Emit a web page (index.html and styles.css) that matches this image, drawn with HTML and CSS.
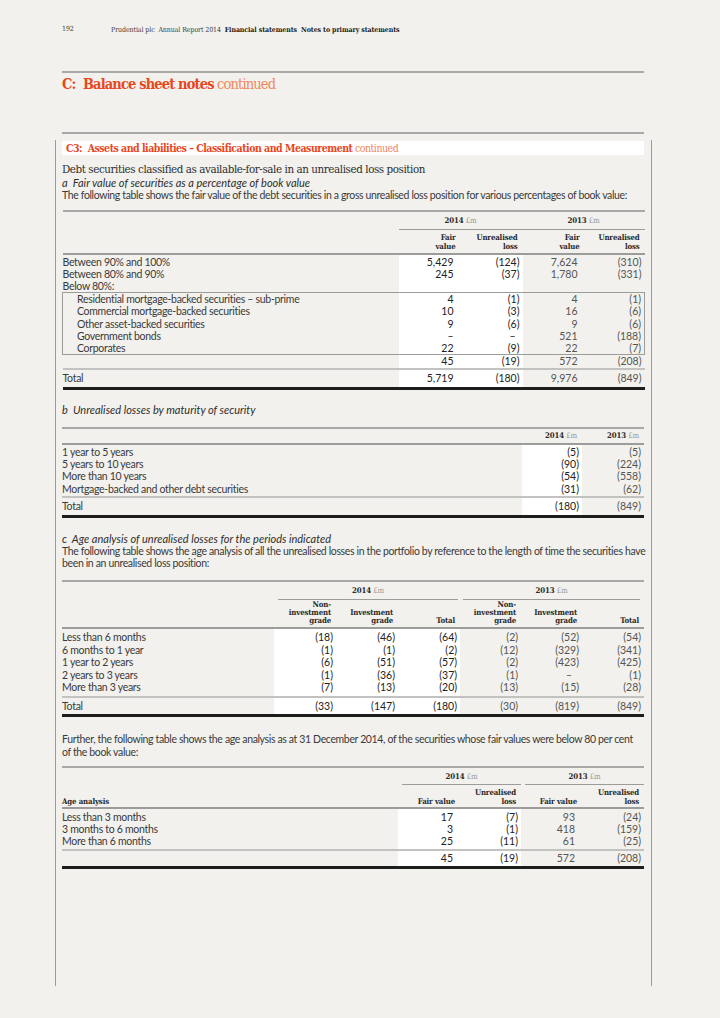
FILE: index.html
```html
<!DOCTYPE html>
<html lang="en">
<head>
<meta charset="utf-8">
<title>Prudential plc Annual Report 2014 – C3 Assets and liabilities</title>
<link rel="stylesheet" href="styles.css">
</head>
<body>
<div class="page">
  <header class="running"><span class="pg">192</span><span class="crumbs">Prudential plc&nbsp; Annual Report 2014&nbsp; <b>Financial statements&nbsp; Notes to primary statements</b></span></header>

  <section class="chapter">
    <h1 class="chapter-title"><b>C:&nbsp; Balance sheet notes</b> <span class="cont">continued</span></h1>
  </section>
  <div class="divider"></div>

  <div class="frame">
    <h2 class="note-bar"><b>C3:&nbsp; Assets and liabilities – Classification and Measurement</b> <span class="cont">continued</span></h2>

    <h3 class="subhead">Debt securities classified as available-for-sale in an unrealised loss position</h3>
    <h4 class="part">a&nbsp; Fair value of securities as a percentage of book value</h4>
    <p class="para">The following table shows the fair value of the debt securities in a gross unrealised loss position for various percentages of book value:</p>

    <table class="t t1">
      <colgroup><col class="c-lab"><col class="c-62"><col class="c-62"><col class="c-62"><col class="c-60"></colgroup>
      <thead>
        <tr class="gr"><th></th><th colspan="2" class="grp"><div class="gl">2014 <span class="u">£m</span></div></th><th colspan="2" class="grp"><div class="gl">2013 <span class="u">£m</span></div></th></tr>
        <tr class="sh"><th></th><th>Fair<br>value</th><th>Unrealised<br>loss</th><th>Fair<br>value</th><th>Unrealised<br>loss</th></tr>
      </thead>
      <tbody>
        <tr class="first"><td>Between 90% and 100%</td><td class="n w p">5,429</td><td class="n w">(124)</td><td class="n o p">7,624</td><td class="n o">(310)</td></tr>
        <tr><td>Between 80% and 90%</td><td class="n w p">245</td><td class="n w">(37)</td><td class="n o p">1,780</td><td class="n o">(331)</td></tr>
        <tr><td>Below 80%:</td><td class="n w"></td><td class="n w"></td><td class="n o"></td><td class="n o"></td></tr>
        <tr class="box bt"><td class="ind">Residential mortgage-backed securities – sub-prime</td><td class="n w p">4</td><td class="n w">(1)</td><td class="n o p">4</td><td class="n o">(1)</td></tr>
        <tr class="box"><td class="ind">Commercial mortgage-backed securities</td><td class="n w p">10</td><td class="n w">(3)</td><td class="n o p">16</td><td class="n o">(6)</td></tr>
        <tr class="box"><td class="ind">Other asset-backed securities</td><td class="n w p">9</td><td class="n w">(6)</td><td class="n o p">9</td><td class="n o">(6)</td></tr>
        <tr class="box"><td class="ind">Government bonds</td><td class="n w p">–</td><td class="n w p">–</td><td class="n o p">521</td><td class="n o">(188)</td></tr>
        <tr class="box bb"><td class="ind">Corporates</td><td class="n w p">22</td><td class="n w">(9)</td><td class="n o p">22</td><td class="n o">(7)</td></tr>
        <tr class="sub"><td></td><td class="n w p">45</td><td class="n w">(19)</td><td class="n o p">572</td><td class="n o">(208)</td></tr>
        <tr class="total"><td>Total</td><td class="n w p">5,719</td><td class="n w">(180)</td><td class="n o p">9,976</td><td class="n o">(849)</td></tr>
      </tbody>
    </table>

    <h4 class="part part-b">b&nbsp; Unrealised losses by maturity of security</h4>

    <table class="t t2">
      <colgroup><col class="c-lab2"><col class="c-60"><col class="c-62"></colgroup>
      <thead>
        <tr class="hr"><th></th><th>2014 <span class="u">£m</span></th><th>2013 <span class="u">£m</span></th></tr>
      </thead>
      <tbody>
        <tr class="first"><td>1 year to 5 years</td><td class="n w">(5)</td><td class="n o">(5)</td></tr>
        <tr><td>5 years to 10 years</td><td class="n w">(90)</td><td class="n o">(224)</td></tr>
        <tr><td>More than 10 years</td><td class="n w">(54)</td><td class="n o">(558)</td></tr>
        <tr class="sub"><td>Mortgage-backed and other debt securities</td><td class="n w">(31)</td><td class="n o">(62)</td></tr>
        <tr class="total"><td>Total</td><td class="n w">(180)</td><td class="n o">(849)</td></tr>
      </tbody>
    </table>

    <h4 class="part part-c">c&nbsp; Age analysis of unrealised losses for the periods indicated</h4>
    <p class="para">The following table shows the age analysis of all the unrealised losses in the portfolio by reference to the length of time the securities have<br>been in an unrealised loss position:</p>

    <table class="t t3">
      <colgroup><col class="c-lab3"><col class="c-62"><col class="c-62"><col class="c-62"><col class="c-61"><col class="c-61"><col class="c-62"></colgroup>
      <thead>
        <tr class="gr"><th></th><th colspan="3" class="grp g14"><div class="gl">2014 <span class="u">£m</span></div></th><th colspan="3" class="grp g13"><div class="gl">2013 <span class="u">£m</span></div></th></tr>
        <tr class="sh"><th></th><th>Non-<br>investment<br>grade</th><th>Investment<br>grade</th><th>Total</th><th>Non-<br>investment<br>grade</th><th>Investment<br>grade</th><th>Total</th></tr>
      </thead>
      <tbody>
        <tr class="first"><td>Less than 6 months</td><td class="n w">(18)</td><td class="n w">(46)</td><td class="n w">(64)</td><td class="n o">(2)</td><td class="n o">(52)</td><td class="n o">(54)</td></tr>
        <tr><td>6 months to 1 year</td><td class="n w">(1)</td><td class="n w">(1)</td><td class="n w">(2)</td><td class="n o">(12)</td><td class="n o">(329)</td><td class="n o">(341)</td></tr>
        <tr><td>1 year to 2 years</td><td class="n w">(6)</td><td class="n w">(51)</td><td class="n w">(57)</td><td class="n o">(2)</td><td class="n o">(423)</td><td class="n o">(425)</td></tr>
        <tr><td>2 years to 3 years</td><td class="n w">(1)</td><td class="n w">(36)</td><td class="n w">(37)</td><td class="n o">(1)</td><td class="n o dash">–</td><td class="n o">(1)</td></tr>
        <tr class="sub"><td>More than 3 years</td><td class="n w">(7)</td><td class="n w">(13)</td><td class="n w">(20)</td><td class="n o">(13)</td><td class="n o">(15)</td><td class="n o">(28)</td></tr>
        <tr class="total"><td>Total</td><td class="n w">(33)</td><td class="n w">(147)</td><td class="n w">(180)</td><td class="n o">(30)</td><td class="n o">(819)</td><td class="n o">(849)</td></tr>
      </tbody>
    </table>

    <p class="para para-d">Further, the following table shows the age analysis as at 31 December 2014, of the securities whose fair values were below 80 per cent<br>of the book value:</p>

    <table class="t t4">
      <colgroup><col class="c-lab"><col class="c-62"><col class="c-61"><col class="c-61"><col class="c-62"></colgroup>
      <thead>
        <tr class="gr"><th></th><th colspan="2" class="grp"><div class="gl">2014 <span class="u">£m</span></div></th><th colspan="2" class="grp"><div class="gl">2013 <span class="u">£m</span></div></th></tr>
        <tr class="sh"><th class="lft">Age analysis</th><th>Fair value</th><th>Unrealised<br>loss</th><th>Fair value</th><th>Unrealised<br>loss</th></tr>
      </thead>
      <tbody>
        <tr class="first"><td>Less than 3 months</td><td class="n w p">17</td><td class="n w">(7)</td><td class="n o p">93</td><td class="n o">(24)</td></tr>
        <tr><td>3 months to 6 months</td><td class="n w p">3</td><td class="n w">(1)</td><td class="n o p">418</td><td class="n o">(159)</td></tr>
        <tr class="sub"><td>More than 6 months</td><td class="n w p">25</td><td class="n w">(11)</td><td class="n o p">61</td><td class="n o">(25)</td></tr>
        <tr class="total"><td></td><td class="n w p">45</td><td class="n w">(19)</td><td class="n o p">572</td><td class="n o">(208)</td></tr>
      </tbody>
    </table>
  </div>
</div>
</body>
</html>
```

FILE: styles.css
```css
* { box-sizing: border-box; margin: 0; padding: 0; }
html, body { width: 720px; height: 1018px; }
body {
  background: #f2f1ed;
  color: #3a3a3a;
  font-family: Lato, "Liberation Sans", sans-serif;
  overflow: hidden;
}
.page { padding-top: 25px; }

/* running header */
.running {
  display: flex;
  margin-left: 62px;
  height: 9px;
  font-family: "DejaVu Serif Condensed", "DejaVu Serif", serif;
  font-size: 7px;
  line-height: 9px;
  color: #3a3a3a;
  letter-spacing: -0.1px;
  white-space: nowrap;
}
.running .pg { width: 49px; }
.running b { font-weight: 700; color: #222; }

/* chapter heading */
.chapter {
  margin: 37px 76px 0 62px;
  height: 61px;
  padding-top: 2px;
  border-top: 2px solid #a9a9a7;
}
.chapter-title {
  font-family: "DejaVu Serif Condensed", "DejaVu Serif", serif;
  font-size: 14.5px;
  line-height: 18px;
  font-weight: 400;
  color: #e8471d;
  letter-spacing: -0.85px;
  white-space: nowrap;
}
.chapter-title b { font-weight: 700; }
.cont { font-weight: 400; color: #f0875f; }
.divider { margin: 0 76px 0 62px; border-top: 2px solid #a9a9a7; }

/* framed note */
.frame {
  margin: 6px 0 0 55px;
  width: 597px;
  height: 846px;
  padding: 1px 7px 0 6px;
  border-left: 1px solid #9c9c9a;
  border-right: 1px solid #9c9c9a;
}
.note-bar {
  height: 14px;
  padding-left: 4px;
  background: #fff;
  font-family: "DejaVu Serif Condensed", "DejaVu Serif", serif;
  font-size: 10.5px;
  line-height: 14px;
  font-weight: 400;
  color: #e8471d;
  letter-spacing: -0.5px;
  white-space: nowrap;
}
.note-bar b { font-weight: 700; }

.subhead {
  margin-top: 8px;
  font-family: "DejaVu Serif Condensed", "DejaVu Serif", serif;
  font-size: 11.5px;
  line-height: 13px;
  font-weight: 400;
  color: #2e2e2e;
  letter-spacing: -0.42px;
  white-space: nowrap;
}
.part {
  font-size: 11px;
  line-height: 13px;
  font-style: italic;
  font-weight: 400;
  color: #2e2e2e;
  white-space: nowrap;
}
.part-b { margin-top: 13px; margin-bottom: 10px; line-height: 14px; }
.part-c { margin-top: 14px; }
.para {
  font-size: 10.5px;
  line-height: 12.6px;
  color: #3a3a3a;
  letter-spacing: -0.36px;
  white-space: nowrap;
}
.para-d { margin-top: 16px; }

/* tables */
.t {
  width: 582px;
  table-layout: fixed;
  border-collapse: collapse;
  border-top: 2px solid #a9a9a7;
  font-size: 10.5px;
  line-height: 12.4px;
  color: #3a3a3a;
}
.t1 { margin-top: 8px; line-height: 12.2px; }
.t3 { margin-top: 10px; line-height: 12.5px; }
.t4 { margin-top: 7px; }
.c-lab { width: 336px; }
.c-lab2 { width: 460px; }
.c-lab3 { width: 212px; }
.c-60 { width: 60px; }
.c-61 { width: 61px; }
.c-62 { width: 62px; }

.t th {
  padding: 0 5px 0 0;
  font-family: "DejaVu Serif Condensed", "DejaVu Serif", serif;
  font-size: 7.8px;
  line-height: 9px;
  font-weight: 700;
  color: #2a2a2a;
  text-align: right;
  vertical-align: bottom;
  letter-spacing: -0.15px;
}
.t th.lft { text-align: left; padding-left: 0; }
.t .u { font-weight: 400; color: #9a9a98; }
.t .gr th { padding: 0; vertical-align: bottom; }
.t .grp { text-align: center; }
.gl {
  height: 18px;
  line-height: 18px;
  border-bottom: 1px solid #9c9c9a;
}
.t4 .gl { height: 17px; line-height: 17px; margin-left: 4px; }
.t3 .g14 .gl { margin: 0 2px 0 4px; }
.t3 .g13 .gl { margin: 0 4px 0 3px; }
.t .sh th { padding-top: 3px; padding-bottom: 2px; border-bottom: 2px solid #9c9c9a; }
.t3 .sh th { line-height: 8.2px; padding-top: 1px; padding-bottom: 2px; }
.t4 .sh th { padding-top: 3px; padding-bottom: 1px; }
.t .hr th { height: 16px; vertical-align: middle; border-bottom: 2px solid #9c9c9a; }

.t td { padding: 0; white-space: nowrap; }
.t td:first-child { letter-spacing: -0.3px; }
.t td.n { text-align: right; padding-right: 3px; }
.t td.p { padding-right: 7px; }
.t td.dash { padding-right: 10px; }
.t td.w { background: #fff; color: #222; }
.t td.o { color: #555; }
.t td.ind { padding-left: 14px; }
.t .first td { padding-top: 1px; }
.t3 .first td, .t4 .first td { padding-top: 2px; }

.t .box td:first-child { border-left: 1px solid #9c9c9a; }
.t .box td:last-child { border-right: 1px solid #9c9c9a; }
.t .bt td { border-top: 1px solid #9c9c9a; }
.t .bb td { border-bottom: 1px solid #9c9c9a; }

.t .sub td { padding-bottom: 1px; border-bottom: 2px solid #c2c2c0; }
.t3 .sub td { padding-bottom: 2px; }
.t .total td { padding-top: 2px; padding-bottom: 2px; border-bottom: 3px solid #1d1d1d; }
.t4 .total td { padding-top: 1px; }
```
